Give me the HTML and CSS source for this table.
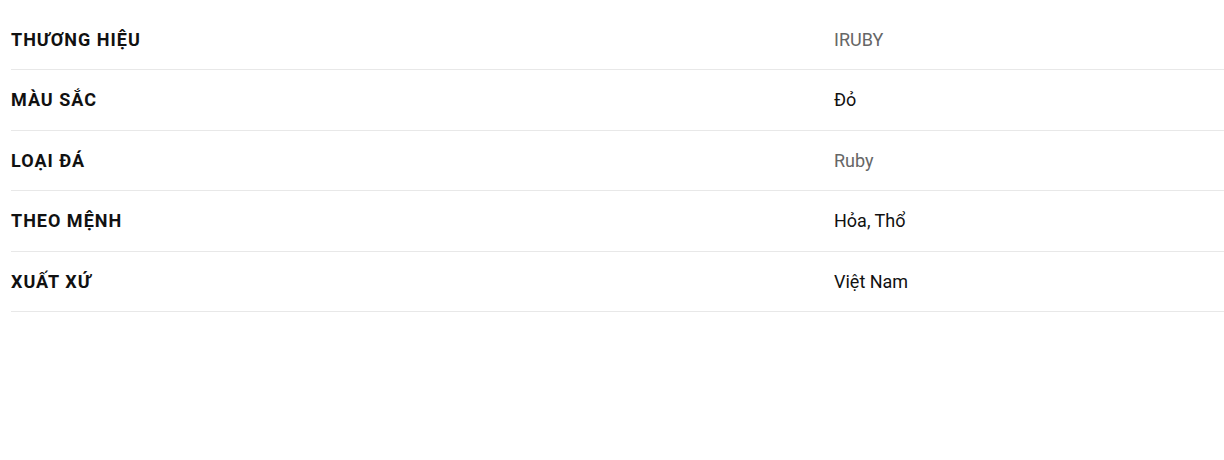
FILE: index.html
```html
<!DOCTYPE html>
<html lang="vi">
<head>
<meta charset="utf-8">
<link rel="stylesheet" href="styles.css">
</head>
<body>
<div class="specs">
  <div class="row"><div class="label">THƯƠNG HIỆU</div><div class="value muted">IRUBY</div></div>
  <div class="row"><div class="label">MÀU SẮC</div><div class="value">Đỏ</div></div>
  <div class="row"><div class="label">LOẠI ĐÁ</div><div class="value muted">Ruby</div></div>
  <div class="row"><div class="label">THEO MỆNH</div><div class="value">Hỏa, Thổ</div></div>
  <div class="row"><div class="label">XUẤT XỨ</div><div class="value">Việt Nam</div></div>
</div>
</body>
</html>
```
FILE: styles.css
```css
html, body {
  margin: 0;
  padding: 0;
  background: #fff;
}
body {
  font-family: Roboto, "Noto Sans", sans-serif;
}
.specs {
  padding: 9.5px 0 0 11px;
}
.row {
  display: grid;
  grid-template-columns: 823px 1fr;
  align-items: center;
  height: 59.5px;
  border-bottom: 1px solid #e8e8e8;
}
.label {
  font-size: 18px;
  font-weight: 700;
  letter-spacing: 1px;
  color: #111;
}
.value {
  font-size: 18px;
  color: #111;
}
.value.muted {
  color: #666;
}
```
